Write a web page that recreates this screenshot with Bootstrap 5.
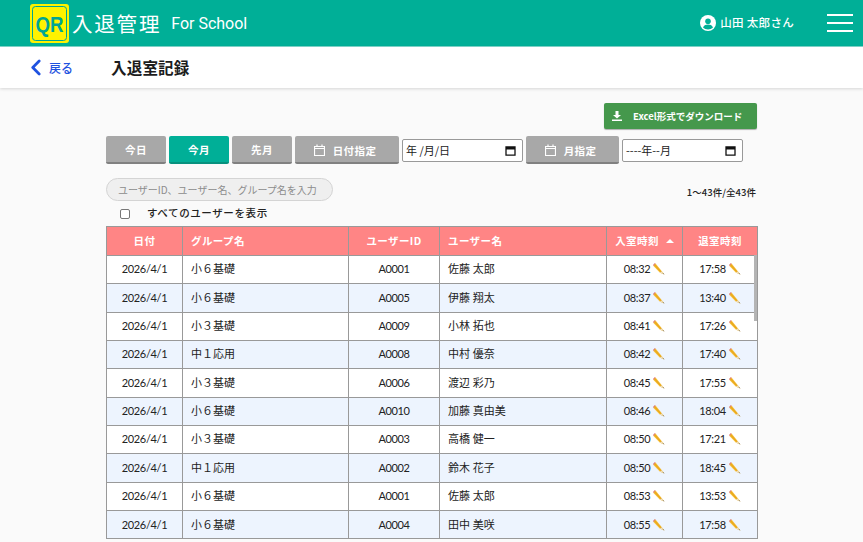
<!DOCTYPE html>
<html lang="ja">
<head>
    <meta charset="UTF-8">
    <title>入退室記録</title>
    <link href="https://cdn.jsdelivr.net/npm/bootstrap@5.3.2/dist/css/bootstrap.min.css" rel="stylesheet">
    <style>
        html, body { height: 542px; overflow: hidden; }
        body { background: #fafafa; font-family: Lato, "Noto Sans CJK JP", sans-serif; font-size: 11px; color: #222; }
        .top-bar { background: #00af97; height: 47px; border-bottom: 1px solid #7fd7cb; color: #fff; padding: 0 10px 0 30px; }
        .qr-logo { width: 39px; height: 39px; flex: none; }
        .qr-logo text { font: 700 22px "Liberation Sans", sans-serif; fill: #00a593; }
        .logo-name { font: 400 20.500px/1 "Noto Sans CJK JP", sans-serif; letter-spacing: 1.800px; margin-left: 3px; }
        .logo-sub { font: 400 16px/1 Roboto, sans-serif; margin-left: 10px; margin-top: 2px; }
        .user-name { font: 500 11.500px/1 "Noto Sans CJK JP", sans-serif; margin-right: 33px; letter-spacing: .3px; }
        .burger { width: 26px; height: 18px; display: flex; flex-direction: column; justify-content: space-between; }
        .burger span { display: block; height: 2px; background: #fff; }
        .sub-bar { background: #fff; height: 41px; box-shadow: 0 1px 3px rgba(0,0,0,.15); padding-left: 30px; }
        .back-link { color: #1f52e0; font: 500 12px/1 "Noto Sans CJK JP", sans-serif; text-decoration: none; width: 81px; }
        .page-title { font: 700 15.500px/1 "Noto Sans CJK JP", sans-serif; color: #1c1c1c; letter-spacing: .2px; }
        .page-body { width: 651px; margin-left: 106px; }
        .excel-btn { background: #45984c; color: #fff; border: 0; border-radius: 2px; width: 153px; height: 26px; margin-top: 15px; padding: 0 0 0 8px; font: 700 9.500px/1 "Noto Sans CJK JP", sans-serif; text-align: left; box-shadow: 0 1px 1px rgba(0,0,0,.3); }
        .excel-btn svg { margin-right: 11px; vertical-align: -1px; }
        .filter-row { margin-top: 7px; height: 28px; }
        .range-btn { background: #a8a8a8; color: #fff; border: 0; border-bottom: 2px solid #808080; border-radius: 2px; height: 28px; width: 60px; padding: 2px 0 0; font: 700 10.500px/1 "Noto Sans CJK JP", sans-serif; letter-spacing: .4px; margin-right: 3px; flex: none; }
        .range-btn.on { background: #00af97; border-bottom-color: #07917e; }
        .range-btn.wide-day { width: 104px; padding-right: 4px; }
        .range-btn.wide-month { width: 93px; padding-right: 4px; }
        .range-btn svg { vertical-align: -1px; }
        .date-box { height: 23px; width: 121px; border: 1px solid #999; border-radius: 2px; background: #fff; font: 400 11px/1 "Noto Sans CJK JP", sans-serif; color: #222; padding: 0 6px 0 3px; margin-top: 3px; flex: none; }
        .date-day { margin-right: 3px; }
        .search-row { margin-top: 14px; height: 23px; }
        .search-box { width: 227px; height: 23px; border: 1px solid #d4d4d4; border-radius: 12px; background: #efefef; color: #8c8c8c; font: 400 10px/21px "Noto Sans CJK JP", sans-serif; padding-left: 11px; }
        .count-text { font: 500 9.500px/1 "Noto Sans CJK JP", sans-serif; margin-top: 10px; margin-right: 1px; letter-spacing: .05px; }
        .all-check { height: 15px; margin-top: 5px; margin-bottom: 5px; padding-left: 14px; font: 500 10.500px/1 "Noto Sans CJK JP", sans-serif; letter-spacing: .6px; }
        .all-check .check-box { width: 10px; height: 10px; border: 1px solid #777; border-radius: 2px; background: #fff; margin-right: 17px; }
        .table-frame { position: relative; }
        .log-table { table-layout: fixed; width: 651px; margin: 0; border-color: #999; --bs-table-bg: transparent; --bs-table-color: #222; font-size: 11px; }
        .log-table th, .log-table td { border: 1px solid #999; padding: 0; text-align: center; vertical-align: middle; }
        .log-table th { background: #ff8585; color: #fff; height: 29px; font: 700 10.500px/1 "Noto Sans CJK JP", sans-serif; letter-spacing: .4px; }
        .log-table td { height: 28.350px; background: #fff; }
        .log-table tr.alt td { background: #edf4fe; }
        .log-table .left-cell { text-align: left; padding-left: 8px; }
        .log-table .num-cell { letter-spacing: -.35px; }
        .sort-up { display: inline-block; border: 4px solid transparent; border-top: 0; border-bottom: 4px solid #fff; margin: 0 0 2px 7px; }
        .pencil { width: 12px; height: 12px; margin-left: 3px; vertical-align: -2px; }
        .scroll-thumb { position: absolute; right: 0; top: 29px; width: 3px; height: 66px; background: #b4b4b4; }
    </style>
</head>
<body>
<!-- Header -->
<header class="top-bar d-flex align-items-center">
    <svg class="qr-logo" viewBox="0 0 39 39">
        <rect width="39" height="39" rx="3" fill="#fff200"/>
        <rect x="2.500" y="2.500" width="34" height="34" rx="3" fill="none" stroke="#00a593" stroke-width="1"/>
        <text x="5.500" y="27.500" textLength="28" lengthAdjust="spacingAndGlyphs">QR</text>
    </svg>
    <span class="logo-name">入退管理</span>
    <span class="logo-sub">For School</span>
    <div class="ms-auto d-flex align-items-center">
        <svg width="16" height="16" viewBox="0 0 16 16" class="me-1"><circle cx="8" cy="8" r="8" fill="#fff"/><circle cx="8" cy="6.200" r="2.800" fill="#00af97"/><path d="M3 12.500c1-2.400 3-3 5-3s4 .6 5 3c-1.200 1.300-3 2-5 2s-3.800-.7-5-2z" fill="#00af97"/></svg>
        <span class="user-name">山田 太郎さん</span>
        <div class="burger"><span></span><span></span><span></span></div>
    </div>
</header>
<!-- Sub header -->
<div class="sub-bar d-flex align-items-center">
    <a class="back-link d-flex align-items-center" href="#">
        <svg width="11" height="17" viewBox="0 0 12 18" class="me-2"><path d="M10 2 3 9l7 7" fill="none" stroke="#1f52e0" stroke-width="3" stroke-linecap="round" stroke-linejoin="round"/></svg>戻る
    </a>
    <span class="page-title">入退室記録</span>
</div>
<!-- Main -->
<main class="page-body">
    <div class="text-end">
        <button class="excel-btn"><svg width="10" height="10" viewBox="0 0 10 10"><path d="M3.500 0h3v4H9L5 7.500 1 4h2.500zM0 8.500h10V10H0z" fill="#fff"/></svg>Excel形式でダウンロード</button>
    </div>
    <div class="filter-row d-flex">
        <button class="range-btn">今日</button>
        <button class="range-btn on">今月</button>
        <button class="range-btn">先月</button>
        <button class="range-btn wide-day">
            <svg width="11" height="12" viewBox="0 0 11 12" class="me-2"><path d="M.5 2.500h10v9H.5zM.5 4.500h10M3 .5v2M8 .5v2" fill="none" stroke="#fff" stroke-width="1.200"/></svg>日付指定
        </button>
        <div class="date-box date-day d-flex align-items-center justify-content-between">
            <span>年 /月/日</span>
            <svg width="11" height="11" viewBox="0 0 11 11"><path d="M1 2h9v8.200H1zM1 3.800h9" fill="none" stroke="#111" stroke-width="1.300"/><path d="M1 2h9v2H1z" fill="#111"/></svg>
        </div>
        <button class="range-btn wide-month">
            <svg width="11" height="12" viewBox="0 0 11 12" class="me-2"><path d="M.5 2.500h10v9H.5zM.5 4.500h10M3 .5v2M8 .5v2" fill="none" stroke="#fff" stroke-width="1.200"/></svg>月指定
        </button>
        <div class="date-box d-flex align-items-center justify-content-between">
            <span>----年--月</span>
            <svg width="11" height="11" viewBox="0 0 11 11"><path d="M1 2h9v8.200H1zM1 3.800h9" fill="none" stroke="#111" stroke-width="1.300"/><path d="M1 2h9v2H1z" fill="#111"/></svg>
        </div>
    </div>
    <div class="search-row d-flex justify-content-between">
        <div class="search-box">ユーザーID、ユーザー名、グループ名を入力</div>
        <div class="count-text">1〜43件/全43件</div>
    </div>
    <div class="all-check d-flex align-items-center">
        <span class="check-box"></span>すべてのユーザーを表示
    </div>
    <div class="table-frame">
        <table class="table log-table">
            <colgroup>
                <col style="width:76px"><col style="width:166px"><col style="width:91px"><col style="width:167px"><col style="width:76px"><col style="width:75px">
            </colgroup>
            <thead>
                <tr>
                    <th>日付</th><th class="left-cell">グループ名</th><th>ユーザーID</th><th class="left-cell">ユーザー名</th><th>入室時刻<span class="sort-up"></span></th><th>退室時刻</th>
                </tr>
            </thead>
            <tbody id="rows"></tbody>
        </table>
        <div class="scroll-thumb"></div>
    </div>
</main>

<script src="https://cdn.jsdelivr.net/npm/bootstrap@5.3.2/dist/js/bootstrap.bundle.min.js"></script>
<script>
const logs = [
    ['小６基礎', 'A0001', '佐藤 太郎', '08:32', '17:58'],
    ['小６基礎', 'A0005', '伊藤 翔太', '08:37', '13:40'],
    ['小３基礎', 'A0009', '小林 拓也', '08:41', '17:26'],
    ['中１応用', 'A0008', '中村 優奈', '08:42', '17:40'],
    ['小３基礎', 'A0006', '渡辺 彩乃', '08:45', '17:55'],
    ['小６基礎', 'A0010', '加藤 真由美', '08:46', '18:04'],
    ['小３基礎', 'A0003', '高橋 健一', '08:50', '17:21'],
    ['中１応用', 'A0002', '鈴木 花子', '08:50', '18:45'],
    ['小６基礎', 'A0001', '佐藤 太郎', '08:53', '13:53'],
    ['小６基礎', 'A0004', '田中 美咲', '08:55', '17:58']
];
// eraser top-left, point bottom-right
const pencil = '<svg class="pencil" viewBox="0 0 12 12"><path d="M2.500 .5 11.500 11.500 7 9.800 .5 3z" fill="#f6bb2c"/><path d="M2.600 .6 .6 3 .1 2 1.600 .2z" fill="#d8665f"/><path d="M8.300 8.300 11.500 11.500 7 9.800z" fill="#eadcc4"/><path d="M10.200 10.300 11.500 11.500 9.700 10.800z" fill="#444"/><path d="M1.500 1.800 8 8.800" stroke="#d58f12" stroke-width=".7"/></svg>';
document.getElementById('rows').innerHTML = logs.map((r, i) => `
    <tr class="${i % 2 ? 'alt' : ''}">
        <td class="num-cell">2026/4/1</td>
        <td class="left-cell">${r[0]}</td>
        <td class="num-cell">${r[1]}</td>
        <td class="left-cell">${r[2]}</td>
        <td class="num-cell">${r[3]}${pencil}</td>
        <td class="num-cell">${r[4]}${pencil}</td>
    </tr>`).join('');
</script>
</body>
</html>
